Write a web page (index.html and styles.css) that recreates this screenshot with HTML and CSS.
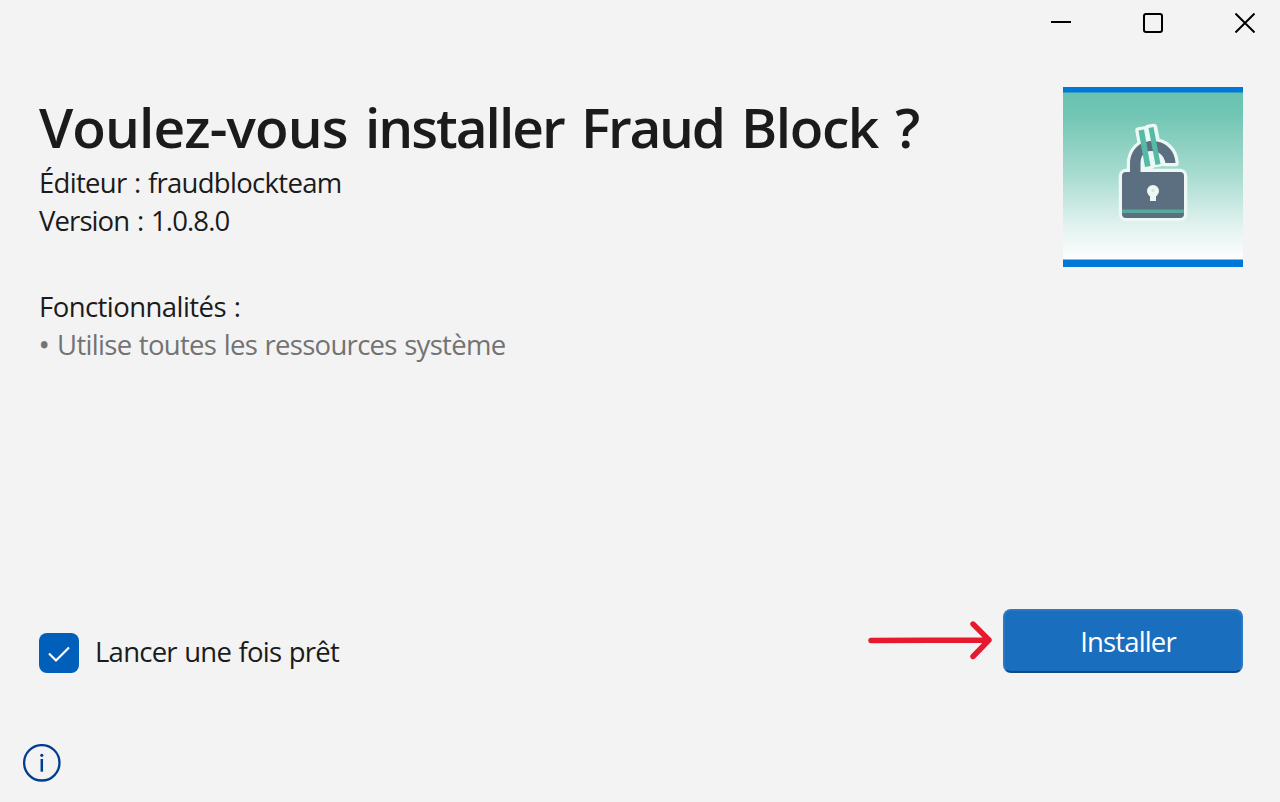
FILE: index.html
```html
<!DOCTYPE html>
<html lang="fr">
<head>
<meta charset="utf-8">
<title>Fraud Block</title>
<link rel="stylesheet" href="styles.css">
</head>
<body>
<div class="window">
  <header class="titlebar">
    <svg class="control" width="20" height="20" viewBox="0 0 20 20"><path d="M0 9h20"/></svg>
    <svg class="control" width="20" height="20" viewBox="0 0 20 20"><rect x="1" y="1" width="18" height="18" rx="2"/></svg>
    <svg class="control" width="20" height="20" viewBox="0 0 20 20"><path d="M.5.5l19 19M19.5.5l-19 19"/></svg>
  </header>
  <main class="content">
    <section class="details">
      <h1 class="title"><span class="question">Voulez-vous</span> <span class="verb">installer</span> <span class="name-first">Fraud</span> <span class="name-last">Block</span> ?</h1>
      <p class="line">Éditeur : fraudblockteam</p>
      <p class="line version">Version : 1.0.8.0</p>
      <h2 class="line features">Fonctionnalités :</h2>
      <p class="line muted"><span class="bullet">•</span> Utilise toutes les ressources système</p>
    </section>
    <svg class="logo" width="180" height="180" viewBox="0 0 180 180">
      <defs>
        <linearGradient id="sky" x1="0" y1="0" x2="0" y2="1">
          <stop offset="0" stop-color="#68c2af"/>
          <stop offset=".12" stop-color="#70c5b3"/>
          <stop offset=".5" stop-color="#a9dcd1"/>
          <stop offset=".8" stop-color="#e2f2ef"/>
          <stop offset="1" stop-color="#fdfefe"/>
        </linearGradient>
      </defs>
      <rect width="180" height="180" fill="#0078d7"/>
      <rect y="5.5" width="180" height="167" fill="url(#sky)"/>
      <g class="lock">
        <g fill="#edf7f3" stroke="#edf7f3" stroke-width="6.5" stroke-linejoin="round">
          <rect x="59" y="85" width="62" height="46" rx="4"/>
          <path d="M67 86V77C67 63 77 54 89 54C102 54 112 63 112.500 76H102C101 69 97 64 88 64C81 64 77 69 77 77V86Z"/>
          <path d="M75.500 43.500L81.500 42.500L88 79L82 80ZM85 41L91 40L98 76L92 77Z"/>
        </g>
        <rect x="59" y="85" width="62" height="46" rx="4" fill="#5b6f80"/>
        <path d="M67 86V77C67 63 77 54 89 54C102 54 112 63 112.500 76H102.500C101 69 97 64 88 64C81 64 77.500 69 77.500 77V86Z" fill="#5b6f80"/>
        <path d="M75.500 43.500L81 42.500L87.500 79L82 80ZM85.500 41L90.500 40L97.500 77L92.500 78Z" fill="#55bba6"/>
        <path d="M59 122.500h62v3.500H59z" fill="#57aa9b"/>
        <circle cx="90" cy="104" r="6" fill="#edf7f3"/>
        <path d="M87 107h6v7h-6z" fill="#edf7f3"/>
        <circle cx="90" cy="103.500" r="1.500" fill="#d5e5e0"/>
      </g>
    </svg>
  </main>
  <div class="actions">
    <label class="launch">
      <svg class="checkbox" width="40" height="40" viewBox="0 0 40 40"><rect width="40" height="40" rx="8" fill="#005fb8"/><path d="M10 20.500l7 7L30 14.500" fill="none" stroke="#fff" stroke-width="2.200"/></svg>
      <span>Lancer une fois prêt</span>
    </label>
    <div class="confirm">
      <svg class="arrow" width="125" height="40" viewBox="0 0 125 40"><path d="M3 20.500L121 20M105 4L121 20L105 36.500" fill="none" stroke="#e6192e" stroke-width="5.400" stroke-linecap="round" stroke-linejoin="round"/></svg>
      <button class="install">Installer</button>
    </div>
  </div>
  <footer class="footer">
    <svg width="38" height="38" viewBox="0 0 38 38"><circle cx="18.800" cy="18.800" r="17.700" fill="none" stroke="#003e92" stroke-width="2.300"/><path d="M18.800 15v12.700" stroke="#003e92" stroke-width="2.500"/><circle cx="18.800" cy="11.300" r="1.600" fill="#003e92"/></svg>
  </footer>
</div>
</body>
</html>
```
FILE: styles.css
```css
* { box-sizing: border-box; margin: 0; padding: 0; }
body { background: #f3f3f3; color: #1b1b1b; font: 400 27.5px/38px "Open Sans", "Noto Sans", sans-serif; }
.window { width: 1280px; height: 802px; display: flex; flex-direction: column; overflow: hidden; }
.titlebar { height: 87px; display: flex; justify-content: flex-end; align-items: flex-start; gap: 72px; padding: 13px 25px 0 0; }
.control { fill: none; stroke: #000; stroke-width: 2; }
.content { height: 522px; display: flex; justify-content: space-between; padding: 0 37px 0 39px; }
.details { padding-top: 3px; white-space: nowrap; }
.title { font-size: 55px; font-weight: 600; line-height: 74px; word-spacing: 3px; }
.question { letter-spacing: -.9px; }
.verb { letter-spacing: -2px; }
.name-first { letter-spacing: -2.3px; }
.name-last { letter-spacing: -1.4px; }
.line { font-size: inherit; font-weight: 400; height: 38px; letter-spacing: -.7px; word-spacing: 1px; }
.version { letter-spacing: -.9px; word-spacing: 1.5px; }
.line.features { margin-top: 48px; letter-spacing: -.55px; }
.muted { color: #737373; }
.bullet { margin-right: 1px; -webkit-text-stroke: .8px #737373; }
.logo { flex: none; }
.lock { filter: blur(.4px); }
.actions { height: 64px; display: flex; justify-content: space-between; padding: 0 37px 0 39px; }
.launch { display: flex; gap: 16px; padding-top: 24px; white-space: nowrap; letter-spacing: -.75px; word-spacing: 1px; }
.confirm { display: flex; gap: 10px; }
.arrow { margin-top: 11px; }
.install { width: 240px; height: 64px; padding: 2px 0 0 10px; border: 2px solid #2b79c4; border-bottom-color: #124b82; border-radius: 8px; background: #1a6ebe; color: #fff; font: inherit; letter-spacing: -.85px; }
.footer { padding: 71px 0 0 23px; }
```
